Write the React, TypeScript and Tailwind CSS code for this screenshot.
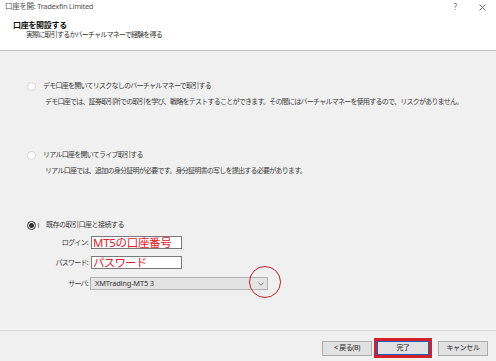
const font = "font-['Noto_Sans','Noto_Sans_CJK_JP',sans-serif]";

function Radio({ checked }: { checked?: boolean }) {
  return (
    <span
      className={`flex h-[9px] w-[9px] shrink-0 items-center justify-center rounded-full bg-white border ${
        checked ? 'border-[#333333]' : 'border-[#d4d4d4]'
      }`}
    >
      {checked && <span className="h-[5px] w-[5px] rounded-full bg-[#333333]" />}
    </span>
  );
}

function Button({ children, primary }: { children: React.ReactNode; primary?: boolean }) {
  return (
    <div
      className={`flex items-center justify-center bg-[#e1e1e1] text-[7px] tracking-[-0.4px] text-[#222] ${
        primary ? 'h-[14px] w-[52px] border-[1.5px] border-[#0a64c8]' : 'h-[15px] w-[50px] border border-[#adadad]'
      }`}
    >
      {children}
    </div>
  );
}

export default function App() {
  return (
    <div className={`relative flex h-[361px] w-[496px] flex-col overflow-hidden bg-[#f0f0f0] ${font}`}>
      {/* header */}
      <div className="h-[51px] shrink-0 border-b border-[#c4c4c4] bg-white">
        <div className="flex h-[14px] items-center pl-[5px]">
          <span className="text-[7.5px] leading-none tracking-[-0.3px] text-[#555]">口座を開: Tradexfin Limited</span>
          <span className="ml-auto text-[8px] leading-none text-[#666]">?</span>
          <svg className="ml-[22px] mr-[10px]" width="7" height="7" viewBox="0 0 7 7">
            <path d="M0.5 0.5 L6.5 6.5 M6.5 0.5 L0.5 6.5" stroke="#555" strokeWidth="0.8" />
          </svg>
        </div>
        <div className="mt-[6px] pl-[13px] text-[8px] font-bold leading-[10px] tracking-[-0.3px] text-[#111]">口座を開設する</div>
        <div className="pl-[26px] text-[7px] leading-[9px] tracking-[-0.8px] text-[#333]">
          実際に取引するかバーチャルマネーで経験を得る
        </div>
      </div>

      {/* body */}
      <div className="flex-1 pt-[30px] text-[7px] tracking-[-0.75px] text-[#3a3a3a]">
        <div className="flex h-[10px] items-center pl-[27px]">
          <Radio />
          <span className="ml-[7px] leading-[10px]">デモ口座を開いてリスクなしのバーチャルマネーで取引する</span>
        </div>
        <div className="mt-[6px] h-[10px] pl-[45px] leading-[10px]">
          デモ口座では、証券取引所での取引を学び、戦略をテストすることができます。その間にはバーチャルマネーを使用するので、リスクがありません。
        </div>

        <div className="mt-[43px] flex h-[10px] items-center pl-[27px]">
          <Radio />
          <span className="ml-[7px] leading-[10px]">リアル口座を開いてライブ取引する</span>
        </div>
        <div className="mt-[6px] h-[10px] pl-[45px] leading-[10px]">
          リアル口座では、追加の身分証明が必要です。身分証明書の写しを提出する必要があります。
        </div>

        <div className="mt-[44px] flex h-[10px] items-center pl-[27px]">
          <Radio checked />
          <span className="ml-[2px] h-[5px] w-px bg-[#888]" />
          <span className="ml-[7px] leading-[10px] tracking-[-0.5px]">既存の取引口座と接続する</span>
        </div>

        <div className="mt-[6px] flex flex-col pl-[40px]">
          <div className="flex h-[13px] items-center">
            <span className="w-[48px] text-right leading-none">ログイン:</span>
            <div className="ml-[3px] flex h-[13px] w-[91px] items-center border border-[#7a7a7a] bg-white pl-[1px] text-[11.5px] leading-[11px] tracking-[-0.3px] text-[#e8202a]">
              <span className="whitespace-nowrap">MT5の口座番号</span>
            </div>
          </div>
          <div className="mt-[7px] flex h-[13px] items-center">
            <span className="w-[48px] text-right leading-none">パスワード:</span>
            <div className="ml-[3px] flex h-[13px] w-[91px] items-center border border-[#7a7a7a] bg-white pl-[1px] text-[11.5px] leading-[11px] tracking-[-0.8px] text-[#e8202a]">
              <span className="whitespace-nowrap">パスワード</span>
            </div>
          </div>
          <div className="mt-[8px] flex h-[13px] items-center">
            <span className="w-[48px] text-right leading-none">サーバ:</span>
            <div className="ml-[2px] flex h-[13px] w-[178px] items-center border border-[#b4b4b4] bg-[#e3e3e3] pl-[4px] pr-[3px]">
              <span className="text-[7.5px] leading-none tracking-[-0.2px] text-[#333]">XMTrading-MT5 3</span>
              <svg className="ml-auto" width="6" height="4" viewBox="0 0 6 4">
                <path d="M0.5 0.8 L3 3.2 L5.5 0.8" fill="none" stroke="#666" strokeWidth="0.8" />
              </svg>
            </div>
          </div>
        </div>
      </div>

      {/* footer */}
      <div className="h-[31px] shrink-0 border-t border-[#dadada]">
        <div className="mt-[7px] flex items-center justify-end pr-[8px]">
          <Button>&lt; 戻る(B)</Button>
          <div className="ml-[2px] border-[3px] border-[#d4202c]">
            <Button primary>完了</Button>
          </div>
          <div className="ml-[6px]">
            <Button>キャンセル</Button>
          </div>
        </div>
      </div>

      {/* annotation circle */}
      <div className="absolute left-[249px] top-[266px] h-[32px] w-[32px] rounded-full border-[1.5px] border-[#c8202c]" />
    </div>
  );
}
